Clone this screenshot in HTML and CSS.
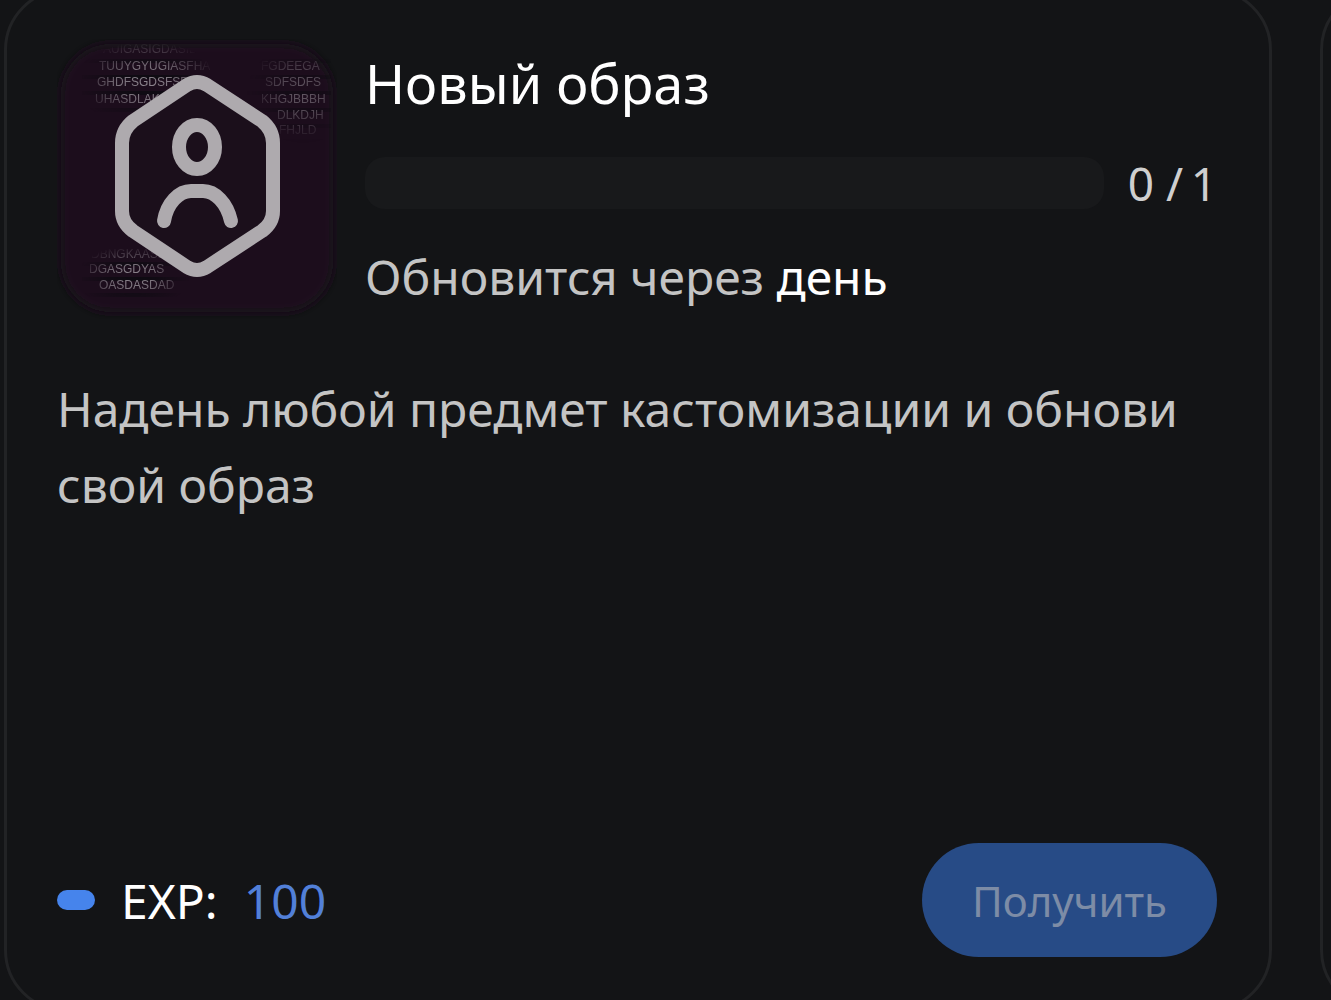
FILE: index.html
```html
<!DOCTYPE html>
<html lang="ru">
<head>
<meta charset="utf-8">
<meta name="viewport" content="width=device-width, initial-scale=1">
<title>Новый образ</title>
<link rel="stylesheet" href="styles.css">
</head>
<body>
<main class="quests">
  <article class="card">
    <header class="head">
      <svg class="emblem" viewBox="0 0 280 280" aria-hidden="true">
        <defs>
          <filter id="soft" x="-10%" y="-10%" width="120%" height="120%"><feGaussianBlur stdDeviation="4"/></filter>
          <filter id="haze"><feGaussianBlur stdDeviation="0.7"/></filter>
          <radialGradient id="glow"><stop offset="0" stop-color="#fff"/><stop offset="0.4" stop-color="#fff" stop-opacity="0.8"/><stop offset="1" stop-color="#fff" stop-opacity="0"/></radialGradient>
          <mask id="fade">
            <ellipse cx="90" cy="44" rx="72" ry="42" fill="url(#glow)"/>
            <ellipse cx="246" cy="54" rx="56" ry="50" fill="url(#glow)" opacity="0.6"/>
            <ellipse cx="76" cy="238" rx="56" ry="32" fill="url(#glow)"/>
          </mask>
        </defs>
        <rect x="4" y="5" width="272" height="268" rx="50" fill="#1c101d" filter="url(#soft)"/>
        <g mask="url(#fade)">
          <g class="bands">
            <path d="M25 22h120M25 38h120M25 54h120M25 71h120M190 22h84M190 38h84M190 54h84M190 71h84M190 87h84M190 102h84M25 225h110M25 240h110M25 256h110"/>
          </g>
          <g class="code" filter="url(#haze)">
            <text x="46" y="14">AUIGASIGDASIDA</text>
            <text x="42" y="31">TUUYGYUGIASFHA</text>
            <text x="40" y="47">GHDFSGDSFSD</text>
            <text x="38" y="64">UHASDLAKSD</text>
            <text x="204" y="31">FGDEEGA</text>
            <text x="208" y="47">SDFSDFS</text>
            <text x="204" y="64">KHGJBBBH</text>
            <text x="220" y="80">DLKDJH</text>
            <text x="222" y="95">FHJLD</text>
            <text x="34" y="219">DBNGKAASD</text>
            <text x="32" y="234">DGASGDYAS</text>
            <text x="42" y="250">OASDASDAD</text>
          </g>
        </g>
        <g class="mark">
          <path d="M130 46Q140 40 150 46L205 82Q216 91 216 104V172Q216 184 205 192L150 228Q140 234 130 228L76 192Q65 184 65 172V104Q65 91 76 82Z" fill="#1b0f1b"/>
          <ellipse cx="140" cy="108" rx="18" ry="22"/>
          <path d="M107 182C110 164 122 152 134 152H146C158 152 170 164 174 182"/>
        </g>
      </svg>
      <div class="summary">
        <h1 class="title">Новый образ</h1>
        <div class="progress">
          <div class="track" role="progressbar" aria-label="Прогресс" aria-valuemin="0" aria-valuemax="1" aria-valuenow="0"></div>
          <span class="count">0 /&thinsp;1</span>
        </div>
        <p class="renew">Обновится через <strong class="when">день</strong></p>
      </div>
    </header>
    <p class="description">Надень любой предмет кастомизации и обнови свой образ</p>
    <footer class="foot">
      <p class="reward"><span class="pill"></span><span>EXP:</span><span class="points">100</span></p>
      <button class="claim" type="button" disabled>Получить</button>
    </footer>
  </article>
  <article class="card"></article>
</main>
</body>
</html>
```
FILE: styles.css
```css
* { box-sizing: border-box; }

body {
  margin: 0;
  overflow: hidden;
  background: #131416;
  color: #fff;
  font-family: "Noto Sans", "Open Sans", sans-serif;
}

h1, p { margin: 0; }

.quests {
  display: flex;
  gap: 48px;
  height: calc(100vh + 24px);
  margin-top: -12px;
  padding-left: 4px;
  overflow: hidden;
}

.card {
  display: flex;
  flex: 0 0 calc(100% - 59px);
  flex-direction: column;
  padding: 48px 52px 52px 50px;
  border: 3px solid #222325;
  border-radius: 62px;
  background: #131416;
}

.head {
  display: flex;
  gap: 28px;
}

.emblem {
  flex: none;
  width: 280px;
  height: 280px;
}

.bands {
  stroke: #0e0b12;
  stroke-width: 4;
}

.code {
  fill: #8f8790;
  font-family: "Liberation Sans", sans-serif;
  font-size: 12px;
}

.mark {
  fill: none;
  stroke: #aeaaae;
  stroke-linecap: round;
  stroke-linejoin: round;
  stroke-width: 14;
}

.summary {
  flex: 1;
  min-width: 0;
}

.title {
  font-size: 54px;
  font-weight: 400;
  line-height: 88px;
}

.progress {
  display: flex;
  gap: 24px;
  align-items: center;
  height: 112px;
}

.track {
  flex: 1;
  height: 52px;
  border-radius: 20px;
  background: #18191b;
}

.count {
  color: #cfcfcf;
  font-size: 46px;
}

.renew,
.description {
  color: #c4c4c4;
  font-size: 48px;
  line-height: 76px;
}

.when {
  color: #fff;
  font-weight: 400;
}

.description { margin-top: 52px; }

.foot {
  display: flex;
  align-items: center;
  justify-content: space-between;
  margin-top: auto;
}

.reward {
  display: flex;
  gap: 26px;
  align-items: center;
  font-size: 48px;
}

.pill {
  width: 38px;
  height: 20px;
  border-radius: 10px;
  background: #4684ec;
}

.points { color: #5280d8; }

.claim {
  height: 114px;
  padding: 0 50px;
  border: 0;
  border-radius: 57px;
  background: #274b86;
  color: #7d8ca6;
  font-family: inherit;
  font-size: 42px;
}
```
